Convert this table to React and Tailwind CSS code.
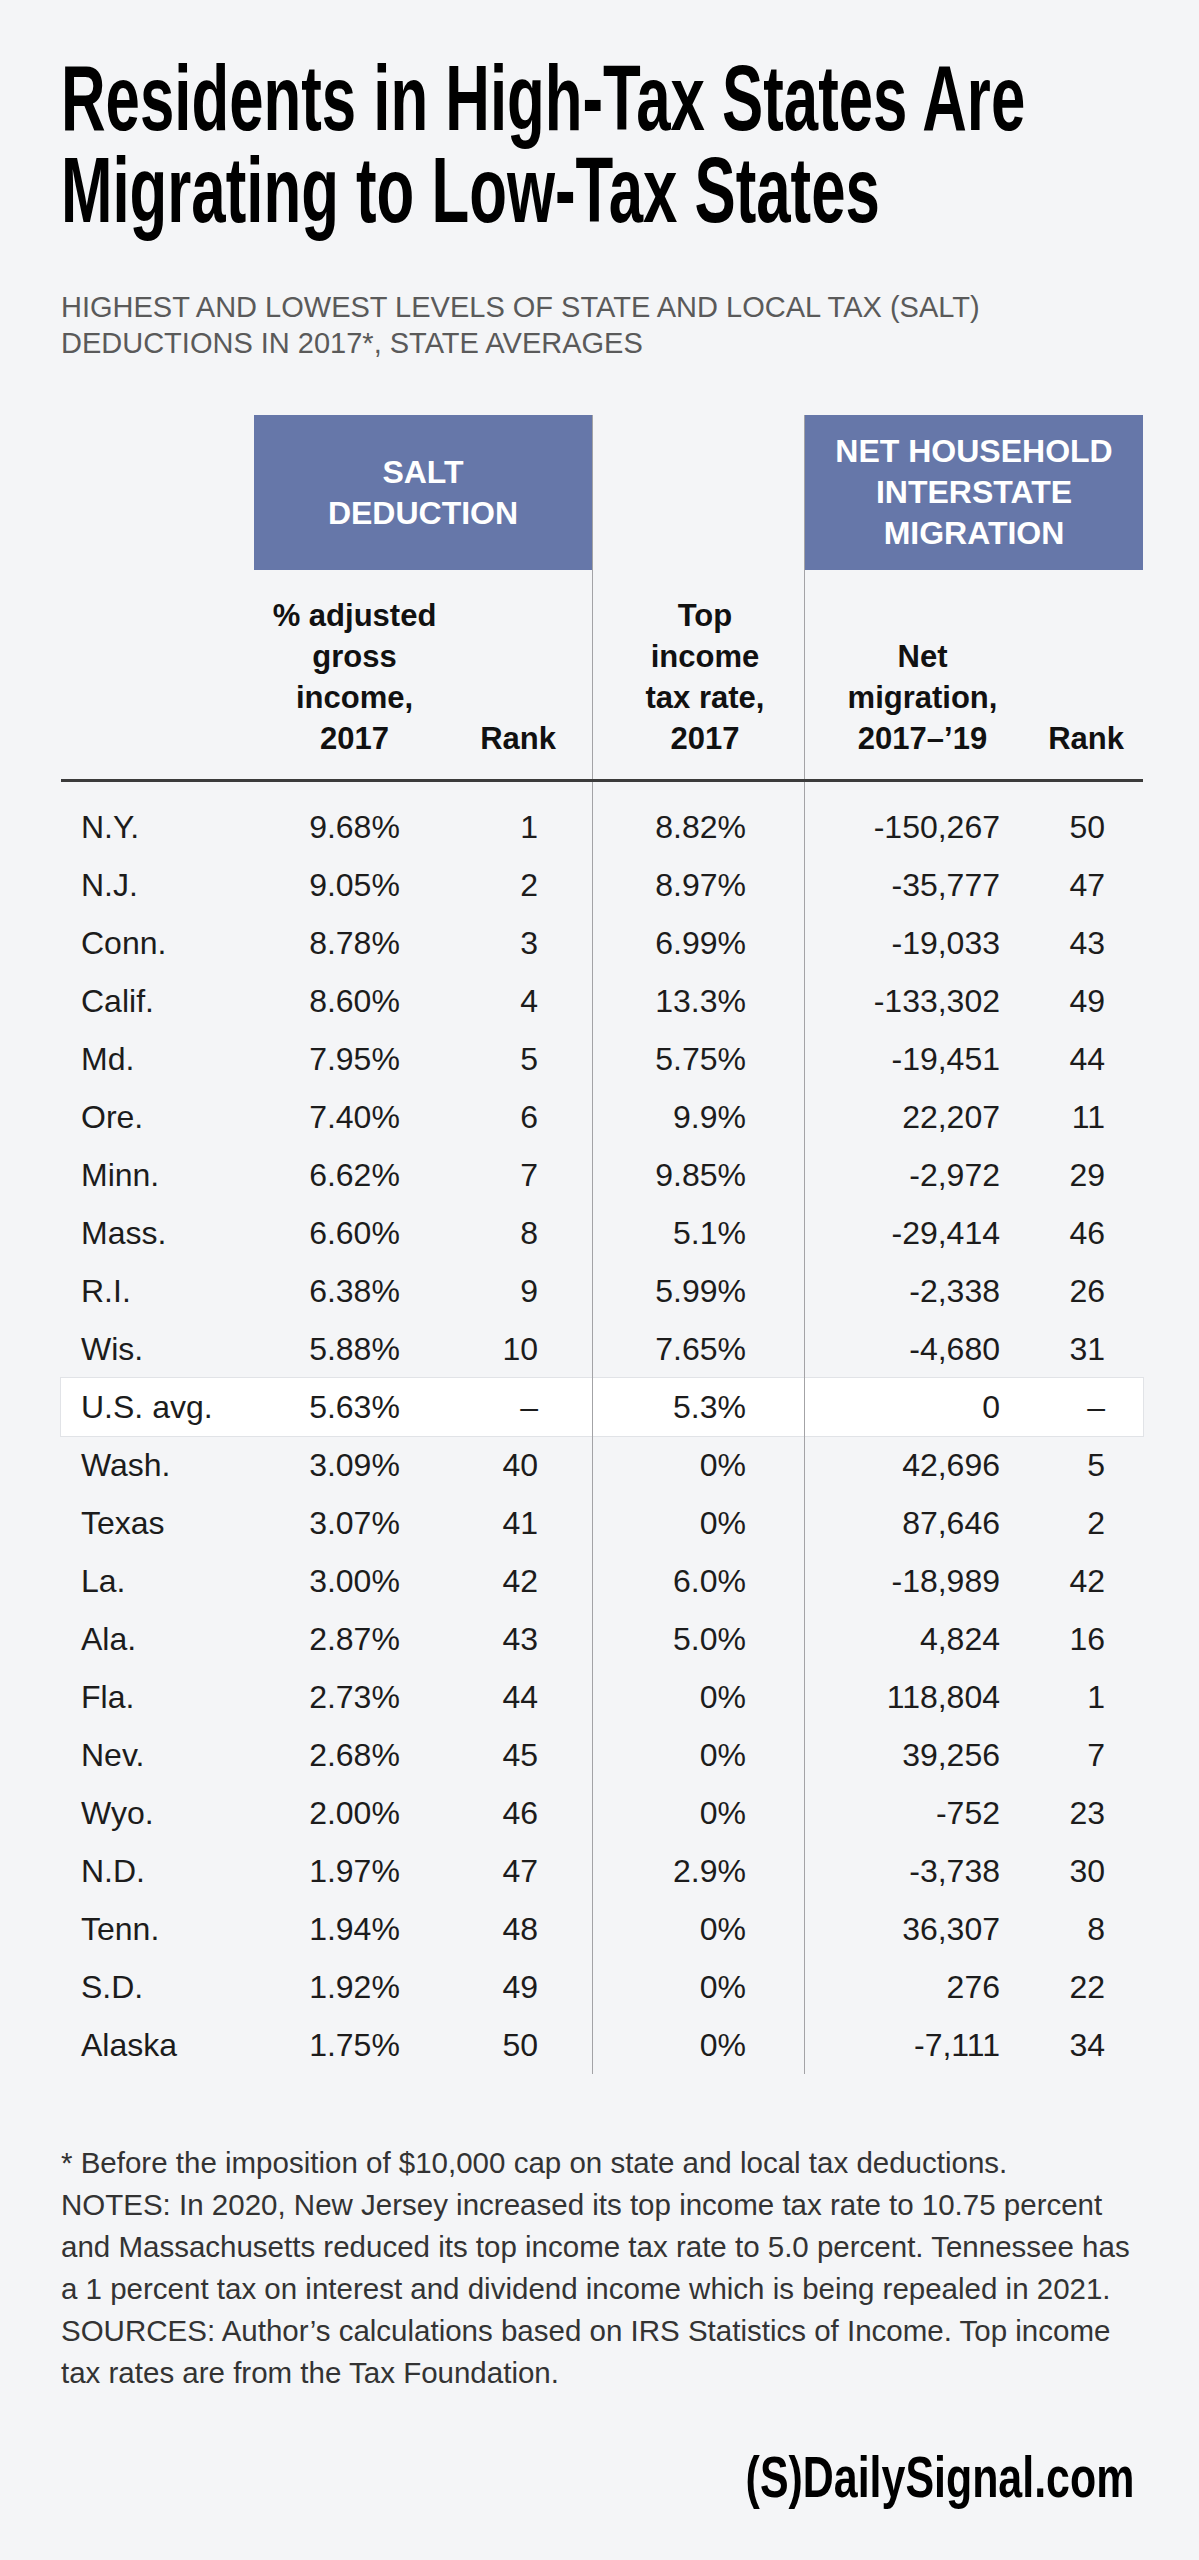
import React from "react";

const rows = [
  ["N.Y.", "9.68%", "1", "8.82%", "-150,267", "50"],
  ["N.J.", "9.05%", "2", "8.97%", "-35,777", "47"],
  ["Conn.", "8.78%", "3", "6.99%", "-19,033", "43"],
  ["Calif.", "8.60%", "4", "13.3%", "-133,302", "49"],
  ["Md.", "7.95%", "5", "5.75%", "-19,451", "44"],
  ["Ore.", "7.40%", "6", "9.9%", "22,207", "11"],
  ["Minn.", "6.62%", "7", "9.85%", "-2,972", "29"],
  ["Mass.", "6.60%", "8", "5.1%", "-29,414", "46"],
  ["R.I.", "6.38%", "9", "5.99%", "-2,338", "26"],
  ["Wis.", "5.88%", "10", "7.65%", "-4,680", "31"],
  ["U.S. avg.", "5.63%", "–", "5.3%", "0", "–"],
  ["Wash.", "3.09%", "40", "0%", "42,696", "5"],
  ["Texas", "3.07%", "41", "0%", "87,646", "2"],
  ["La.", "3.00%", "42", "6.0%", "-18,989", "42"],
  ["Ala.", "2.87%", "43", "5.0%", "4,824", "16"],
  ["Fla.", "2.73%", "44", "0%", "118,804", "1"],
  ["Nev.", "2.68%", "45", "0%", "39,256", "7"],
  ["Wyo.", "2.00%", "46", "0%", "-752", "23"],
  ["N.D.", "1.97%", "47", "2.9%", "-3,738", "30"],
  ["Tenn.", "1.94%", "48", "0%", "36,307", "8"],
  ["S.D.", "1.92%", "49", "0%", "276", "22"],
  ["Alaska", "1.75%", "50", "0%", "-7,111", "34"],
];

const cols = "grid grid-cols-[193px_201px_137px_213px_235px_103px]";
const divider = "border-x-[1.5px] border-[#a3a3a6]";

const notes = [
  "* Before the imposition of $10,000 cap on state and local tax deductions.",
  "NOTES: In 2020, New Jersey increased its top income tax rate to 10.75 percent",
  "and Massachusetts reduced its top income tax rate to 5.0 percent. Tennessee has",
  "a 1 percent tax on interest and dividend income which is being repealed in 2021.",
  "SOURCES: Author’s calculations based on IRS Statistics of Income. Top income",
  "tax rates are from the Tax Foundation.",
];

const DataRow = ({ row, highlight }) => (
  <div
    className={`${cols} h-[58px] text-[32px] leading-[58px] text-[#1c1c1c] ${
      highlight ? "bg-white ring-1 ring-[#e1e3e7]" : ""
    }`}
  >
    <div className="pl-[20px] whitespace-nowrap">{row[0]}</div>
    <div className="text-center">{row[1]}</div>
    <div className="text-right pr-[54px]">{row[2]}</div>
    <div className={`text-right pr-[58px] ${divider}`}>{row[3]}</div>
    <div className="text-right pr-[40px]">{row[4]}</div>
    <div className="text-right pr-[38px]">{row[5]}</div>
  </div>
);

const App = () => {
  return (
    <div className="min-h-[2560px] overflow-hidden bg-[#f4f5f7] pl-[61px] pr-[56px] pt-[52px] font-['Liberation_Sans',Arial,sans-serif]">
      {/* Title */}
      <h1 className="text-[93px] leading-[92px] font-bold text-black">
        <span className="block w-max origin-left scale-x-[0.664] whitespace-nowrap">
          Residents in High-Tax States Are
        </span>
        <span className="block w-max origin-left scale-x-[0.664] whitespace-nowrap">
          Migrating to Low-Tax States
        </span>
      </h1>

      <p className="mt-[53px] text-[29px] leading-[36px] text-[#5a5a5a]">
        HIGHEST AND LOWEST LEVELS OF STATE AND LOCAL TAX (SALT)
        <br />
        DEDUCTIONS IN 2017*, STATE AVERAGES
      </p>

      {/* Table */}
      <div className="mt-[54px]">
        <div className={`${cols} h-[155px]`}>
          <div />
          <div className="col-span-2 flex items-center justify-center bg-[#6677a9] text-center text-[32px] leading-[41px] font-bold text-white">
            SALT
            <br />
            DEDUCTION
          </div>
          <div className={divider} />
          <div className="col-span-2 flex items-center justify-center bg-[#6677a9] text-center text-[32px] leading-[41px] font-bold text-white">
            NET HOUSEHOLD
            <br />
            INTERSTATE
            <br />
            MIGRATION
          </div>
        </div>

        <div className={`${cols} h-[209px] text-[31px] leading-[41px] font-bold text-[#111]`}>
          <div />
          <div className="flex flex-col justify-end pb-[20px] text-center">
            <span>% adjusted</span>
            <span>gross</span>
            <span>income,</span>
            <span>2017</span>
          </div>
          <div className="flex flex-col justify-end pb-[20px] pr-[36px] text-right">
            Rank
          </div>
          <div className={`flex flex-col justify-end pb-[20px] pl-[13px] text-center ${divider}`}>
            <span>Top</span>
            <span>income</span>
            <span>tax rate,</span>
            <span>2017</span>
          </div>
          <div className="flex flex-col justify-end pb-[20px] text-center">
            <span>Net</span>
            <span>migration,</span>
            <span>2017–’19</span>
          </div>
          <div className="flex flex-col justify-end pb-[20px] pr-[19px] text-right">
            Rank
          </div>
        </div>

        <div className={`${cols} h-[19px] border-t-[3px] border-[#3b3b3b]`}>
          <div className="col-span-3" />
          <div className={divider} />
        </div>

        {rows.map((row) => (
          <DataRow key={row[0]} row={row} highlight={row[0] === "U.S. avg."} />
        ))}
      </div>

      {/* Notes */}
      <div className="mt-[68px] text-[29.5px] leading-[42px] text-[#333]">
        {notes.map((line) => (
          <p key={line} className="whitespace-nowrap">
            {line}
          </p>
        ))}
      </div>

      {/* Logo */}
      <div className="mt-[54px] flex justify-end pr-[9px]">
        <span className="inline-block origin-right scale-x-[0.74] whitespace-nowrap text-[58px] leading-[58px] font-bold text-black">
          (S)DailySignal.com
        </span>
      </div>
    </div>
  );
};

export default App;
